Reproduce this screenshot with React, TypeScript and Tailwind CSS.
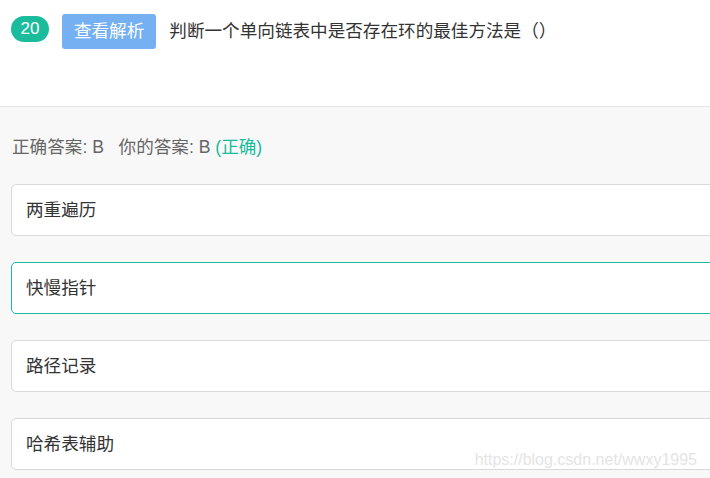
import React from 'react';

const options = [
  { id: 'A', text: '两重遍历', box: 'border-[#d9d9d9]' },
  { id: 'B', text: '快慢指针', box: 'border-[#1bbc9b]' },
  { id: 'C', text: '路径记录', box: 'border-[#d9d9d9]' },
  { id: 'D', text: '哈希表辅助', box: 'border-[#d9d9d9]' },
];

const App = () => {
  return (
    <div
      className="w-[710px] h-[478px] overflow-hidden bg-[#f8f8f8] relative"
      style={{ fontFamily: '"Liberation Sans", "Noto Sans CJK SC", sans-serif' }}
    >
      {/* Question header */}
      <div className="h-[107px] bg-white border-b border-[#e6e6e6] flex items-start pl-[11px] pt-[14px]">
        <span className="mt-[2px] h-[26px] px-[9.5px] rounded-full bg-[#1abc9c] text-white text-[17px] leading-[26px]">
          20
        </span>
        <button className="ml-[13px] h-[35px] px-[12px] rounded-[3px] bg-[#75b0f2] text-white text-[17.6px]">
          查看解析
        </button>
        <span className="ml-[13px] mt-[4px] text-[17.6px] leading-[26px] text-[#333]">
          判断一个单向链表中是否存在环的最佳方法是（）
        </span>
      </div>

      {/* Answer */}
      <div className="pl-[12px] pt-[28px] text-[17.6px] leading-[24px] text-[#666]">
        正确答案: B&nbsp;&nbsp;&nbsp;你的答案: B <span className="text-[#1abc9c]">(正确)</span>
      </div>

      {/* Options */}
      <div className="pl-[11px] pt-[25px] flex flex-col gap-[26px]">
        {options.map((o) => (
          <div
            key={o.id}
            className={'w-[760px] h-[52px] flex items-center pl-[14px] bg-white rounded-[5px] border text-[17.6px] text-[#333] ' + o.box}
          >
            {o.text}
          </div>
        ))}
      </div>

      {/* watermark */}
      <div className="absolute right-[13px] bottom-[6px] text-[16px] text-[#e4e4e4]">
        https://blog.csdn.net/wwxy1995
      </div>
    </div>
  );
};

export default App;
